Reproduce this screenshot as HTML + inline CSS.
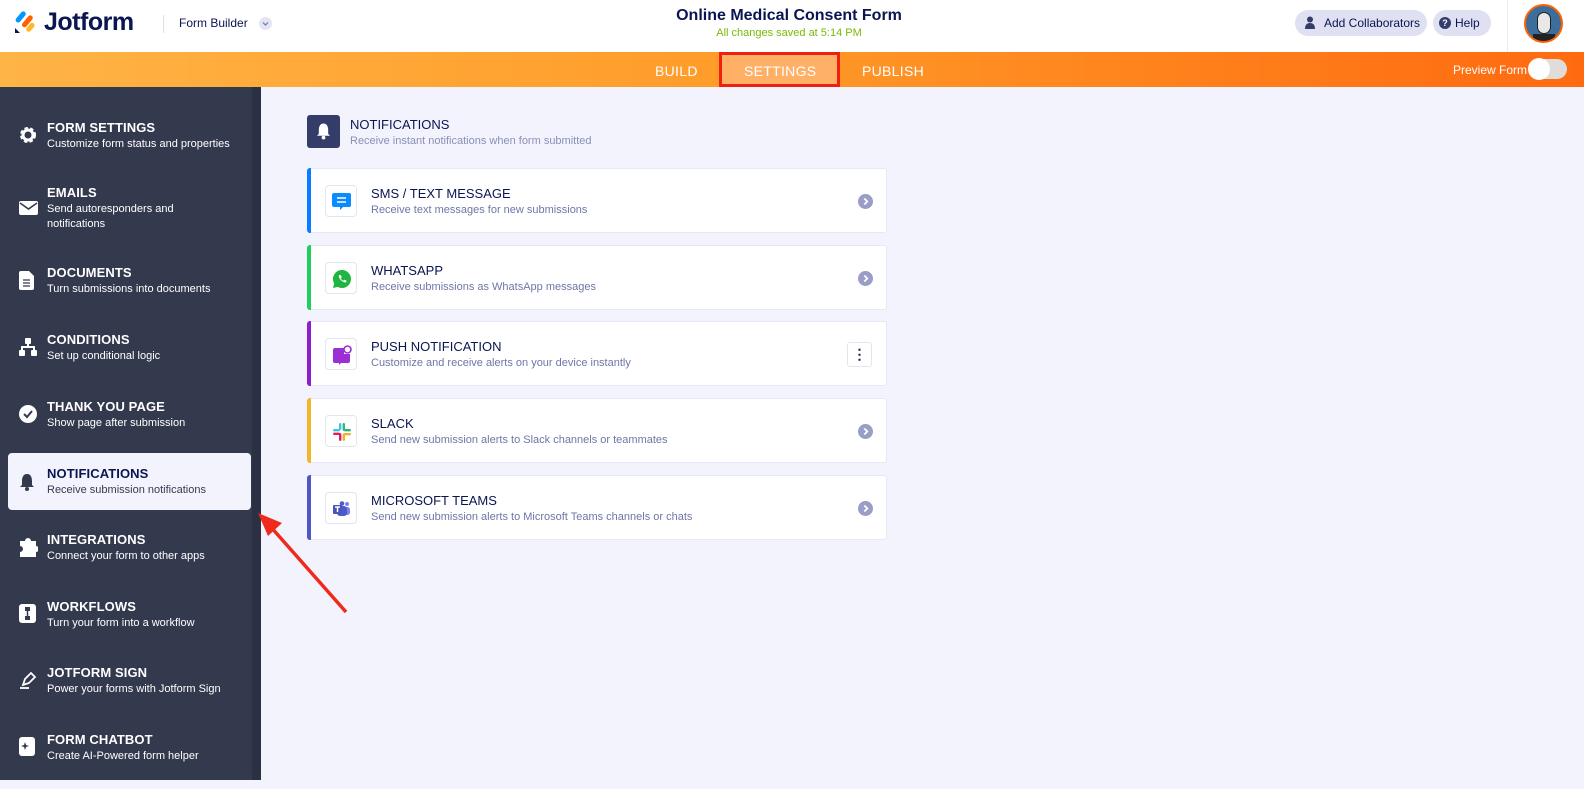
<!DOCTYPE html>
<html><head><meta charset="utf-8"><style>
*{box-sizing:border-box;margin:0;padding:0}
body{width:1584px;height:780px;overflow:hidden;font-family:"Liberation Sans",sans-serif;background:#f3f3fe;position:relative}
.hdr{position:absolute;left:0;top:0;width:1584px;height:52px;background:#fff}
.bar{position:absolute;left:0;top:52px;width:1584px;height:35px;background:linear-gradient(90deg,#ffb446 0%,#ff9c2a 45%,#ff6a10 100%)}
.side{position:absolute;left:0;top:87px;width:252px;height:693px;background:#343a4e}
.strip{position:absolute;left:252px;top:87px;width:9px;height:693px;background:#2b3042}
.it{position:absolute;left:8px;width:243px;height:57px;color:#fff}
.it .t{position:absolute;left:39px;top:0;font-size:13px;font-weight:bold;letter-spacing:.1px}
.it .d{position:absolute;left:39px;top:17px;font-size:11px;line-height:15px}
.it svg{position:absolute;left:11px}
.act{background:#f3f3fe;border-radius:4px;color:#0a1551}
.card{position:absolute;left:307px;width:580px;height:65px;background:#fff;border-radius:3px;border:1px solid #e8e8f5}
.card .b{position:absolute;left:-1px;top:-1px;bottom:-1px;width:4px;border-radius:3px 0 0 3px}
.card .ic{position:absolute;left:17px;top:16px;width:32px;height:32px;border:1px solid #e3e5f0;border-radius:4px;background:#fff}
.card .t{position:absolute;left:63px;top:17px;font-size:13px;color:#0a1551}
.card .d{position:absolute;left:63px;top:35px;font-size:11px;color:#6f76a7}
.card .ch{position:absolute;right:13px;top:25px;width:15px;height:15px}
</style></head><body>
<div class="hdr">
 <svg style="position:absolute;left:14px;top:9px" width="24" height="26" viewBox="0 0 24 26"><rect x="4" y="1" width="5" height="13" rx="2.5" transform="rotate(40 6 8)" fill="#0099ff"/><rect x="11" y="5" width="5" height="14" rx="2.5" transform="rotate(40 13 12)" fill="#ff6100"/><rect x="14" y="13" width="5" height="10" rx="2.5" transform="rotate(40 16 18)" fill="#ffb629"/><path d="M1 19 L6 24 L1 24Z" fill="#0a1551"/></svg>
 <div style="position:absolute;left:44px;top:8px;font-size:25px;font-weight:bold;color:#0a1551;letter-spacing:-.5px">Jotform</div>
 <div style="position:absolute;left:163px;top:15px;width:1px;height:18px;background:#e0e0e8"></div>
 <div style="position:absolute;left:179px;top:16px;font-size:12px;color:#0a1551">Form Builder</div>
 <svg style="position:absolute;left:259px;top:17px" width="13" height="13" viewBox="0 0 13 13"><circle cx="6.5" cy="6.5" r="6.5" fill="#e3e5f5"/><path d="M4 5.5l2.5 2.5 2.5-2.5" stroke="#6f76a7" stroke-width="1.2" fill="none"/></svg>
 <div style="position:absolute;left:0;width:1578px;top:7px;text-align:center;font-size:16px;font-weight:bold;color:#0a1551">Online Medical Consent Form</div>
 <div style="position:absolute;left:0;width:1578px;top:27px;text-align:center;font-size:11px;color:#78bb07">All changes saved at 5:14 PM</div>
 <div style="position:absolute;left:1295px;top:10px;width:132px;height:26px;border-radius:13px;background:#dfe1f2;font-size:12px;color:#0a1551;line-height:26px;padding-left:29px">Add Collaborators</div>
 <svg style="position:absolute;left:1304px;top:16px" width="12" height="13" viewBox="0 0 12 13"><circle cx="6" cy="3.5" r="3" fill="#343c6a"/><path d="M1 13 Q1 7 6 7 Q11 7 11 13Z" fill="#343c6a"/></svg>
 <div style="position:absolute;left:1433px;top:10px;width:58px;height:26px;border-radius:13px;background:#dfe1f2;font-size:12px;color:#0a1551;line-height:26px;padding-left:22px">Help</div>
 <div style="position:absolute;left:1439px;top:17px;width:12px;height:12px;border-radius:50%;background:#343c6a;color:#fff;font-size:9px;font-weight:bold;text-align:center;line-height:12px">?</div>
 <div style="position:absolute;left:1507px;top:0;width:1px;height:52px;background:#ececf2"></div>
 <div style="position:absolute;left:1524px;top:4px;width:39px;height:39px;border-radius:50%;background:#3c6e9c;border:2px solid #ff6100;overflow:hidden"><div style="position:absolute;left:11px;top:6px;width:14px;height:22px;border-radius:7px;background:#e8e8e8;border:1px solid #222"></div><div style="position:absolute;left:7px;top:28px;width:22px;height:10px;background:#222"></div></div>
</div>
<div class="bar">
 <div style="position:absolute;left:655px;top:11px;font-size:14px;color:#fff;letter-spacing:.3px">BUILD</div>
 <div style="position:absolute;left:719px;top:0;width:121px;height:35px;border:3px solid #f02010;background:#ffb067"></div>
 <div style="position:absolute;left:744px;top:11px;font-size:14px;color:#fff;letter-spacing:.3px">SETTINGS</div>
 <div style="position:absolute;left:862px;top:11px;font-size:14px;color:#fff;letter-spacing:.3px">PUBLISH</div>
 <div style="position:absolute;left:1453px;top:11px;font-size:12px;color:#fff">Preview Form</div>
 <div style="position:absolute;left:1529px;top:7px;width:38px;height:20px;border-radius:10px;background:#e0dcda"></div>
 <div style="position:absolute;left:1528px;top:6px;width:22px;height:22px;border-radius:50%;background:#fff"></div>
</div>
<div class="side"></div><div class="strip"></div>

<div class="it" style="top:120px"><svg style="top:6px" width="18" height="18" viewBox="0 0 18 18"><circle cx="9" cy="9" r="6" fill="none" stroke="#fff" stroke-width="4" stroke-dasharray="3 2"/><circle cx="9" cy="9" r="5" fill="none" stroke="#fff" stroke-width="3"/></svg><div class="t">FORM SETTINGS</div><div class="d">Customize form status and properties</div></div>
<div class="it" style="top:185px"><svg style="top:16px" width="19" height="14" viewBox="0 0 19 14"><rect width="19" height="14" rx="2" fill="#fff"/><path d="M1 2 L9.5 8 L18 2" stroke="#343a4e" stroke-width="1.6" fill="none"/></svg><div class="t">EMAILS</div><div class="d">Send autoresponders and<br>notifications</div></div>
<div class="it" style="top:265px"><svg style="top:6px" width="15" height="19" viewBox="0 0 15 19"><path d="M2 0h8l5 5v12a2 2 0 0 1-2 2H2a2 2 0 0 1-2-2V2a2 2 0 0 1 2-2z" fill="#fff"/><path d="M4 9h7M4 12h7M4 15h7" stroke="#343a4e" stroke-width="1.3"/></svg><div class="t">DOCUMENTS</div><div class="d">Turn submissions into documents</div></div>
<div class="it" style="top:332px"><svg style="top:6px" width="18" height="18" viewBox="0 0 18 18"><rect x="6" y="0" width="6" height="6" rx="1" fill="#fff"/><rect x="0" y="12" width="6" height="6" rx="1" fill="#fff"/><rect x="12" y="12" width="6" height="6" rx="1" fill="#fff"/><path d="M9 6v3M3 12V9h12v3" stroke="#fff" stroke-width="2" fill="none"/></svg><div class="t">CONDITIONS</div><div class="d">Set up conditional logic</div></div>
<div class="it" style="top:399px"><svg style="top:6px" width="18" height="18" viewBox="0 0 18 18"><circle cx="9" cy="9" r="9" fill="#fff"/><path d="M5 9l3 3 5-6" stroke="#343a4e" stroke-width="2" fill="none"/></svg><div class="t">THANK YOU PAGE</div><div class="d">Show page after submission</div></div>
<div class="it act" style="top:453px"><svg style="top:20px" width="16" height="18" viewBox="0 0 16 18"><path d="M8 1C4 1 3 5 3 8v4l-2 2h14l-2-2V8c0-3-1-7-5-7z" fill="#343a4e"/><circle cx="8" cy="16" r="2" fill="#343a4e"/></svg><div class="t" style="top:13px">NOTIFICATIONS</div><div class="d" style="top:30px;color:#343a4e">Receive submission notifications</div></div>
<div class="it" style="top:532px"><svg style="top:6px" width="19" height="19" viewBox="0 0 19 19"><path d="M6 3a3 3 0 0 1 6 0h5v5a3 3 0 0 1 0 6v5H1v-5a3 3 0 0 0 0-6V3z" fill="#fff"/></svg><div class="t">INTEGRATIONS</div><div class="d">Connect your form to other apps</div></div>
<div class="it" style="top:599px"><svg style="top:5px" width="17" height="19" viewBox="0 0 17 19"><rect width="17" height="19" rx="3" fill="#fff"/><rect x="6" y="3" width="5" height="4" fill="#343a4e"/><rect x="6" y="12" width="5" height="4" fill="#343a4e"/><path d="M8.5 7v5" stroke="#343a4e" stroke-width="1.5"/></svg><div class="t">WORKFLOWS</div><div class="d">Turn your form into a workflow</div></div>
<div class="it" style="top:665px"><svg style="top:6px" width="18" height="18" viewBox="0 0 18 18"><path d="M4 14l2-6 6-6 4 4-6 6z" fill="none" stroke="#fff" stroke-width="1.8"/><path d="M1 17h9" stroke="#fff" stroke-width="1.8"/></svg><div class="t">JOTFORM SIGN</div><div class="d">Power your forms with Jotform Sign</div></div>
<div class="it" style="top:732px"><svg style="top:5px" width="16" height="19" viewBox="0 0 16 19"><rect width="16" height="19" rx="3" fill="#fff"/><path d="M6 5l1 3 3 1-3 1-1 3-1-3-3-1 3-1z" fill="#343a4e"/></svg><div class="t">FORM CHATBOT</div><div class="d">Create AI-Powered form helper</div></div>

<div style="position:absolute;left:307px;top:115px;width:33px;height:33px;border-radius:3px;background:#343c6a"></div>
<svg style="position:absolute;left:316px;top:122px" width="15" height="18" viewBox="0 0 16 18"><path d="M8 1C4 1 3 5 3 8v4l-2 2h14l-2-2V8c0-3-1-7-5-7z" fill="#fff"/><circle cx="8" cy="16" r="2" fill="#fff"/></svg>
<div style="position:absolute;left:350px;top:117px;font-size:13px;color:#0a1551">NOTIFICATIONS</div>
<div style="position:absolute;left:350px;top:135px;font-size:11px;color:#8a8fb5">Receive instant notifications when form submitted</div>

<div class="card" style="top:168px"><div class="b" style="background:#0a7cff"></div><div class="ic"><svg style="position:absolute;left:6px;top:6px" width="19" height="19" viewBox="0 0 19 19"><path d="M2 1h15a2 2 0 0 1 2 2v10a2 2 0 0 1-2 2H11l-3 3v-3H2a2 2 0 0 1-2-2V3a2 2 0 0 1 2-2z" fill="#0a8cff"/><path d="M5 6h9M5 10h9" stroke="#fff" stroke-width="1.6"/></svg></div><div class="t">SMS / TEXT MESSAGE</div><div class="d">Receive text messages for new submissions</div><svg class="ch" viewBox="0 0 15 15"><circle cx="7.5" cy="7.5" r="7.5" fill="#9a9dc6"/><path d="M6.3 4.5l3 3-3 3" stroke="#fff" stroke-width="1.8" fill="none"/></svg></div>
<div class="card" style="top:245px"><div class="b" style="background:#1fce5d"></div><div class="ic"><svg style="position:absolute;left:6px;top:6px" width="20" height="20" viewBox="0 0 20 20"><path d="M10 1a9 9 0 0 1 0 18c-1.6 0-3-.4-4.3-1.1L1 19l1.2-4.5A9 9 0 0 1 10 1z" fill="#1fb543"/><path d="M7 6c-.5 1 0 4 3 6s4 1.5 4.5 1l-.3-1.6-2-.7-1 1c-1-.5-2-1.5-2.5-2.5l1-1-.7-2z" fill="#fff"/></svg></div><div class="t">WHATSAPP</div><div class="d">Receive submissions as WhatsApp messages</div><svg class="ch" viewBox="0 0 15 15"><circle cx="7.5" cy="7.5" r="7.5" fill="#9a9dc6"/><path d="M6.3 4.5l3 3-3 3" stroke="#fff" stroke-width="1.8" fill="none"/></svg></div>
<div class="card" style="top:321px"><div class="b" style="background:#8c1ecd"></div><div class="ic"><svg style="position:absolute;left:7px;top:6px" width="19" height="20" viewBox="0 0 19 20"><path d="M2 3h9v6h6v7a2 2 0 0 1-2 2H8l-2 2v-2H2a2 2 0 0 1-2-2V5a2 2 0 0 1 2-2z" fill="#9b2fd4"/><circle cx="14.5" cy="4.5" r="3.5" fill="#fff" stroke="#9b2fd4" stroke-width="1.6"/></svg></div><div class="t">PUSH NOTIFICATION</div><div class="d">Customize and receive alerts on your device instantly</div><div style="position:absolute;right:14px;top:20px;width:25px;height:25px;border:1px solid #e3e5f0;border-radius:3px;text-align:center;font-size:14px;font-weight:bold;line-height:22px;color:#0a1551">⋮</div></div>
<div class="card" style="top:398px"><div class="b" style="background:#f3b62a"></div><div class="ic"><svg style="position:absolute;left:7px;top:7px" width="18" height="18" viewBox="0 0 18 18"><rect x="0" y="6" width="7" height="2.4" rx="1.2" fill="#36c5f0"/><rect x="6" y="0" width="2.4" height="7" rx="1.2" fill="#36c5f0"/><rect x="9.6" y="0" width="2.4" height="8" rx="1.2" fill="#2eb67d"/><rect x="11" y="6" width="7" height="2.4" rx="1.2" fill="#2eb67d"/><rect x="10" y="10" width="8" height="2.4" rx="1.2" fill="#ecb22e"/><rect x="9.6" y="11" width="2.4" height="7" rx="1.2" fill="#ecb22e"/><rect x="6" y="10" width="2.4" height="8" rx="1.2" fill="#e01e5a"/><rect x="0" y="9.6" width="7" height="2.4" rx="1.2" fill="#e01e5a"/></svg></div><div class="t">SLACK</div><div class="d">Send new submission alerts to Slack channels or teammates</div><svg class="ch" viewBox="0 0 15 15"><circle cx="7.5" cy="7.5" r="7.5" fill="#9a9dc6"/><path d="M6.3 4.5l3 3-3 3" stroke="#fff" stroke-width="1.8" fill="none"/></svg></div>
<div class="card" style="top:475px"><div class="b" style="background:#4f56c8"></div><div class="ic"><svg style="position:absolute;left:7px;top:8px" width="18" height="16" viewBox="0 0 18 16"><circle cx="14" cy="3" r="2" fill="#7b83eb"/><rect x="10" y="6" width="7" height="8" rx="2.5" fill="#7b83eb"/><circle cx="9" cy="2.5" r="2.3" fill="#5059c9"/><rect x="4" y="5" width="10" height="10" rx="3" fill="#5059c9"/><rect x="0" y="4" width="9" height="9" rx="1" fill="#4b53bc"/><path d="M2 6h5M4.5 6v5" stroke="#fff" stroke-width="1.4"/></svg></div><div class="t">MICROSOFT TEAMS</div><div class="d">Send new submission alerts to Microsoft Teams channels or chats</div><svg class="ch" viewBox="0 0 15 15"><circle cx="7.5" cy="7.5" r="7.5" fill="#9a9dc6"/><path d="M6.3 4.5l3 3-3 3" stroke="#fff" stroke-width="1.8" fill="none"/></svg></div>

<svg style="position:absolute;left:0;top:0" width="1584" height="780"><path d="M346 612 L270 526" stroke="#ef2a1c" stroke-width="3.5"/><path d="M258 513 L282 523 L268 536Z" fill="#ef2a1c"/></svg>
</body></html>
